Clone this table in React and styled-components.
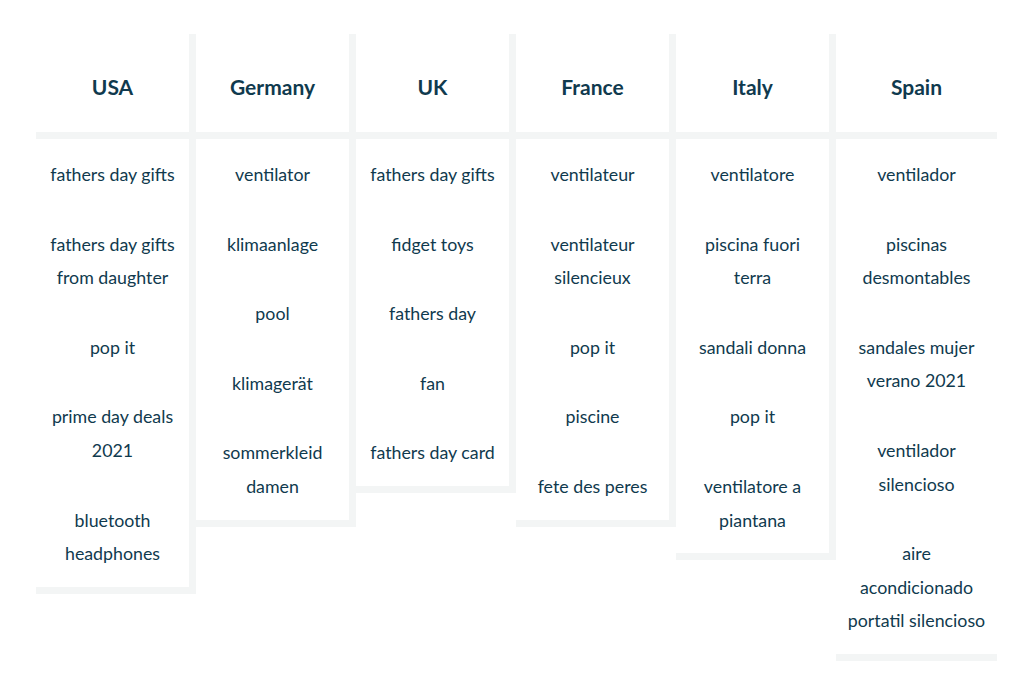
import React from "react";
import styled, { createGlobalStyle } from "styled-components";

const GlobalStyle = createGlobalStyle`
  html, body { margin: 0; padding: 0; background: #ffffff; }
  body { font-family: Lato, "Open Sans", sans-serif; }
  * { box-sizing: border-box; }
`;

const Page = styled.div`
  width: 1024px;
  height: 684px;
  padding: 34px 0 0 36px;
  background: #ffffff;
`;

const Table = styled.div`
  display: flex;
  align-items: flex-start;
`;

const Column = styled.section`
  width: ${(p) => (p.$last ? "161px" : "160px")};
  border-right: ${(p) => (p.$last ? "none" : "7px solid #f3f5f5")};
  border-bottom: 7px solid #f3f5f5;
  background: #ffffff;
  display: flex;
  flex-direction: column;
`;

const Header = styled.h2`
  margin: 0;
  height: 105px;
  padding-top: 6px;
  display: flex;
  align-items: center;
  justify-content: center;
  border-bottom: 7px solid #f3f5f5;
  font-family: Lato, sans-serif;
  font-weight: 700;
  font-size: 21px;
  color: #103a4e;
`;

const List = styled.ul`
  list-style: none;
  margin: 0;
  padding: 19px 10px 16px;
  display: flex;
  flex-direction: column;
  gap: 36px;
`;

const Item = styled.li`
  font-family: Lato, sans-serif;
  font-size: 17.8px;
  line-height: 33.6px;
  text-align: center;
  color: #103a4e;
`;

const data = [
  {
    country: "USA",
    items: [
      "fathers day gifts",
      "fathers day gifts from daughter",
      "pop it",
      "prime day deals 2021",
      "bluetooth headphones",
    ],
  },
  {
    country: "Germany",
    items: ["ventilator", "klimaanlage", "pool", "klimagerät", "sommerkleid damen"],
  },
  {
    country: "UK",
    items: ["fathers day gifts", "fidget toys", "fathers day", "fan", "fathers day card"],
  },
  {
    country: "France",
    items: ["ventilateur", "ventilateur silencieux", "pop it", "piscine", "fete des peres"],
  },
  {
    country: "Italy",
    items: [
      "ventilatore",
      "piscina fuori terra",
      "sandali donna",
      "pop it",
      "ventilatore a piantana",
    ],
  },
  {
    country: "Spain",
    items: [
      "ventilador",
      "piscinas desmontables",
      "sandales mujer verano 2021",
      "ventilador silencioso",
      "aire acondicionado portatil silencioso",
    ],
  },
];

export default function App() {
  return (
    <>
      <GlobalStyle />
      <Page>
        <Table>
          {data.map((col, i) => (
            <Column key={col.country} $last={i === data.length - 1}>
              <Header>{col.country}</Header>
              <List>
                {col.items.map((it) => (
                  <Item key={it}>{it}</Item>
                ))}
              </List>
            </Column>
          ))}
        </Table>
      </Page>
    </>
  );
}
